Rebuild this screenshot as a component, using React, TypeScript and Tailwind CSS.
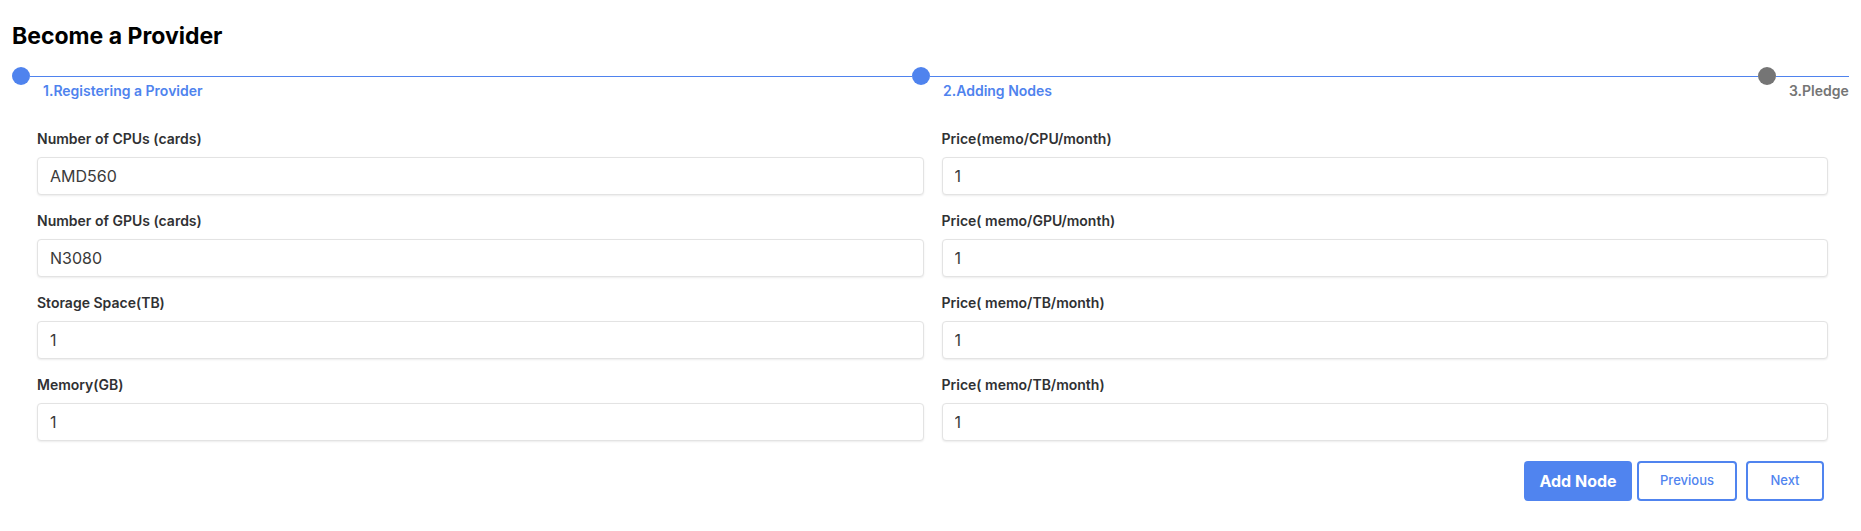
const fields = [
  { left: "Number of CPUs (cards)", lv: "AMD560", right: "Price(memo/CPU/month)", rv: "1" },
  { left: "Number of GPUs (cards)", lv: "N3080", right: "Price( memo/GPU/month)", rv: "1" },
  { left: "Storage Space(TB)", lv: "1", right: "Price( memo/TB/month)", rv: "1" },
  { left: "Memory(GB)", lv: "1", right: "Price( memo/TB/month)", rv: "1" },
];

const Field = ({ label, value }: { label: string; value: string }) => (
  <div className="flex flex-col">
    <label className="text-[14px] leading-5 font-semibold text-[#303133]">{label}</label>
    <input
      readOnly
      value={value}
      className="mt-2 h-[38px] w-full rounded-[4px] border border-[#e3e3e3] bg-white px-3 text-[16px] text-[#3a3a3a] shadow-[0_1px_2px_rgba(0,0,0,0.08)] outline-none"
    />
  </div>
);

const Step = ({
  label,
  active,
  className,
}: {
  label: string;
  active: boolean;
  className: string;
}) => (
  <div className={`flex flex-col ${className}`}>
    <div className="flex h-[18px] items-center">
      <div
        className={`h-[18px] w-[18px] shrink-0 rounded-full ${active ? "bg-[#4f83ee]" : "bg-[#757575]"}`}
      />
      <div className="h-px flex-1 bg-[#4f83ee]" />
    </div>
    <div
      className={`-mt-[2px] pl-[31px] text-[14px] leading-4 font-semibold whitespace-nowrap ${active ? "text-[#4f83ee]" : "text-[#757575]"}`}
    >
      {label}
    </div>
  </div>
);

export default function App() {
  return (
    <div className="min-h-[531px] w-full bg-white font-['Inter',sans-serif]">
      <h1 className="px-3 pt-[22px] text-[23px] leading-7 font-bold text-black">Become a Provider</h1>

      <div className="mt-[17px] flex pl-3 pr-3">
        <Step label="1.Registering a Provider" active className="w-[900px]" />
        <Step label="2.Adding Nodes" active className="w-[846px]" />
        <Step label="3.Pledge" active={false} className="flex-1" />
      </div>

      <div className="mt-[30px] grid grid-cols-2 gap-x-[18px] gap-y-4 pl-[37px] pr-[33px]">
        {fields.map((f, i) => (
          <div key={i} className="contents">
            <Field label={f.left} value={f.lv} />
            <Field label={f.right} value={f.rv} />
          </div>
        ))}
      </div>

      <div className="mt-5 flex justify-end pr-[37px]">
        <button className="h-10 w-[108px] rounded-[4px] bg-[#5084ef] text-[16px] font-bold text-white">
          Add Node
        </button>
        <button className="ml-[5px] h-10 w-[100px] rounded-[4px] border-2 border-[#5084ef] bg-white text-[13px] font-medium text-[#5084ef]">
          Previous
        </button>
        <button className="ml-[9px] h-10 w-[78px] rounded-[4px] border-2 border-[#5084ef] bg-white text-[13px] font-medium text-[#5084ef]">
          Next
        </button>
      </div>
    </div>
  );
}
